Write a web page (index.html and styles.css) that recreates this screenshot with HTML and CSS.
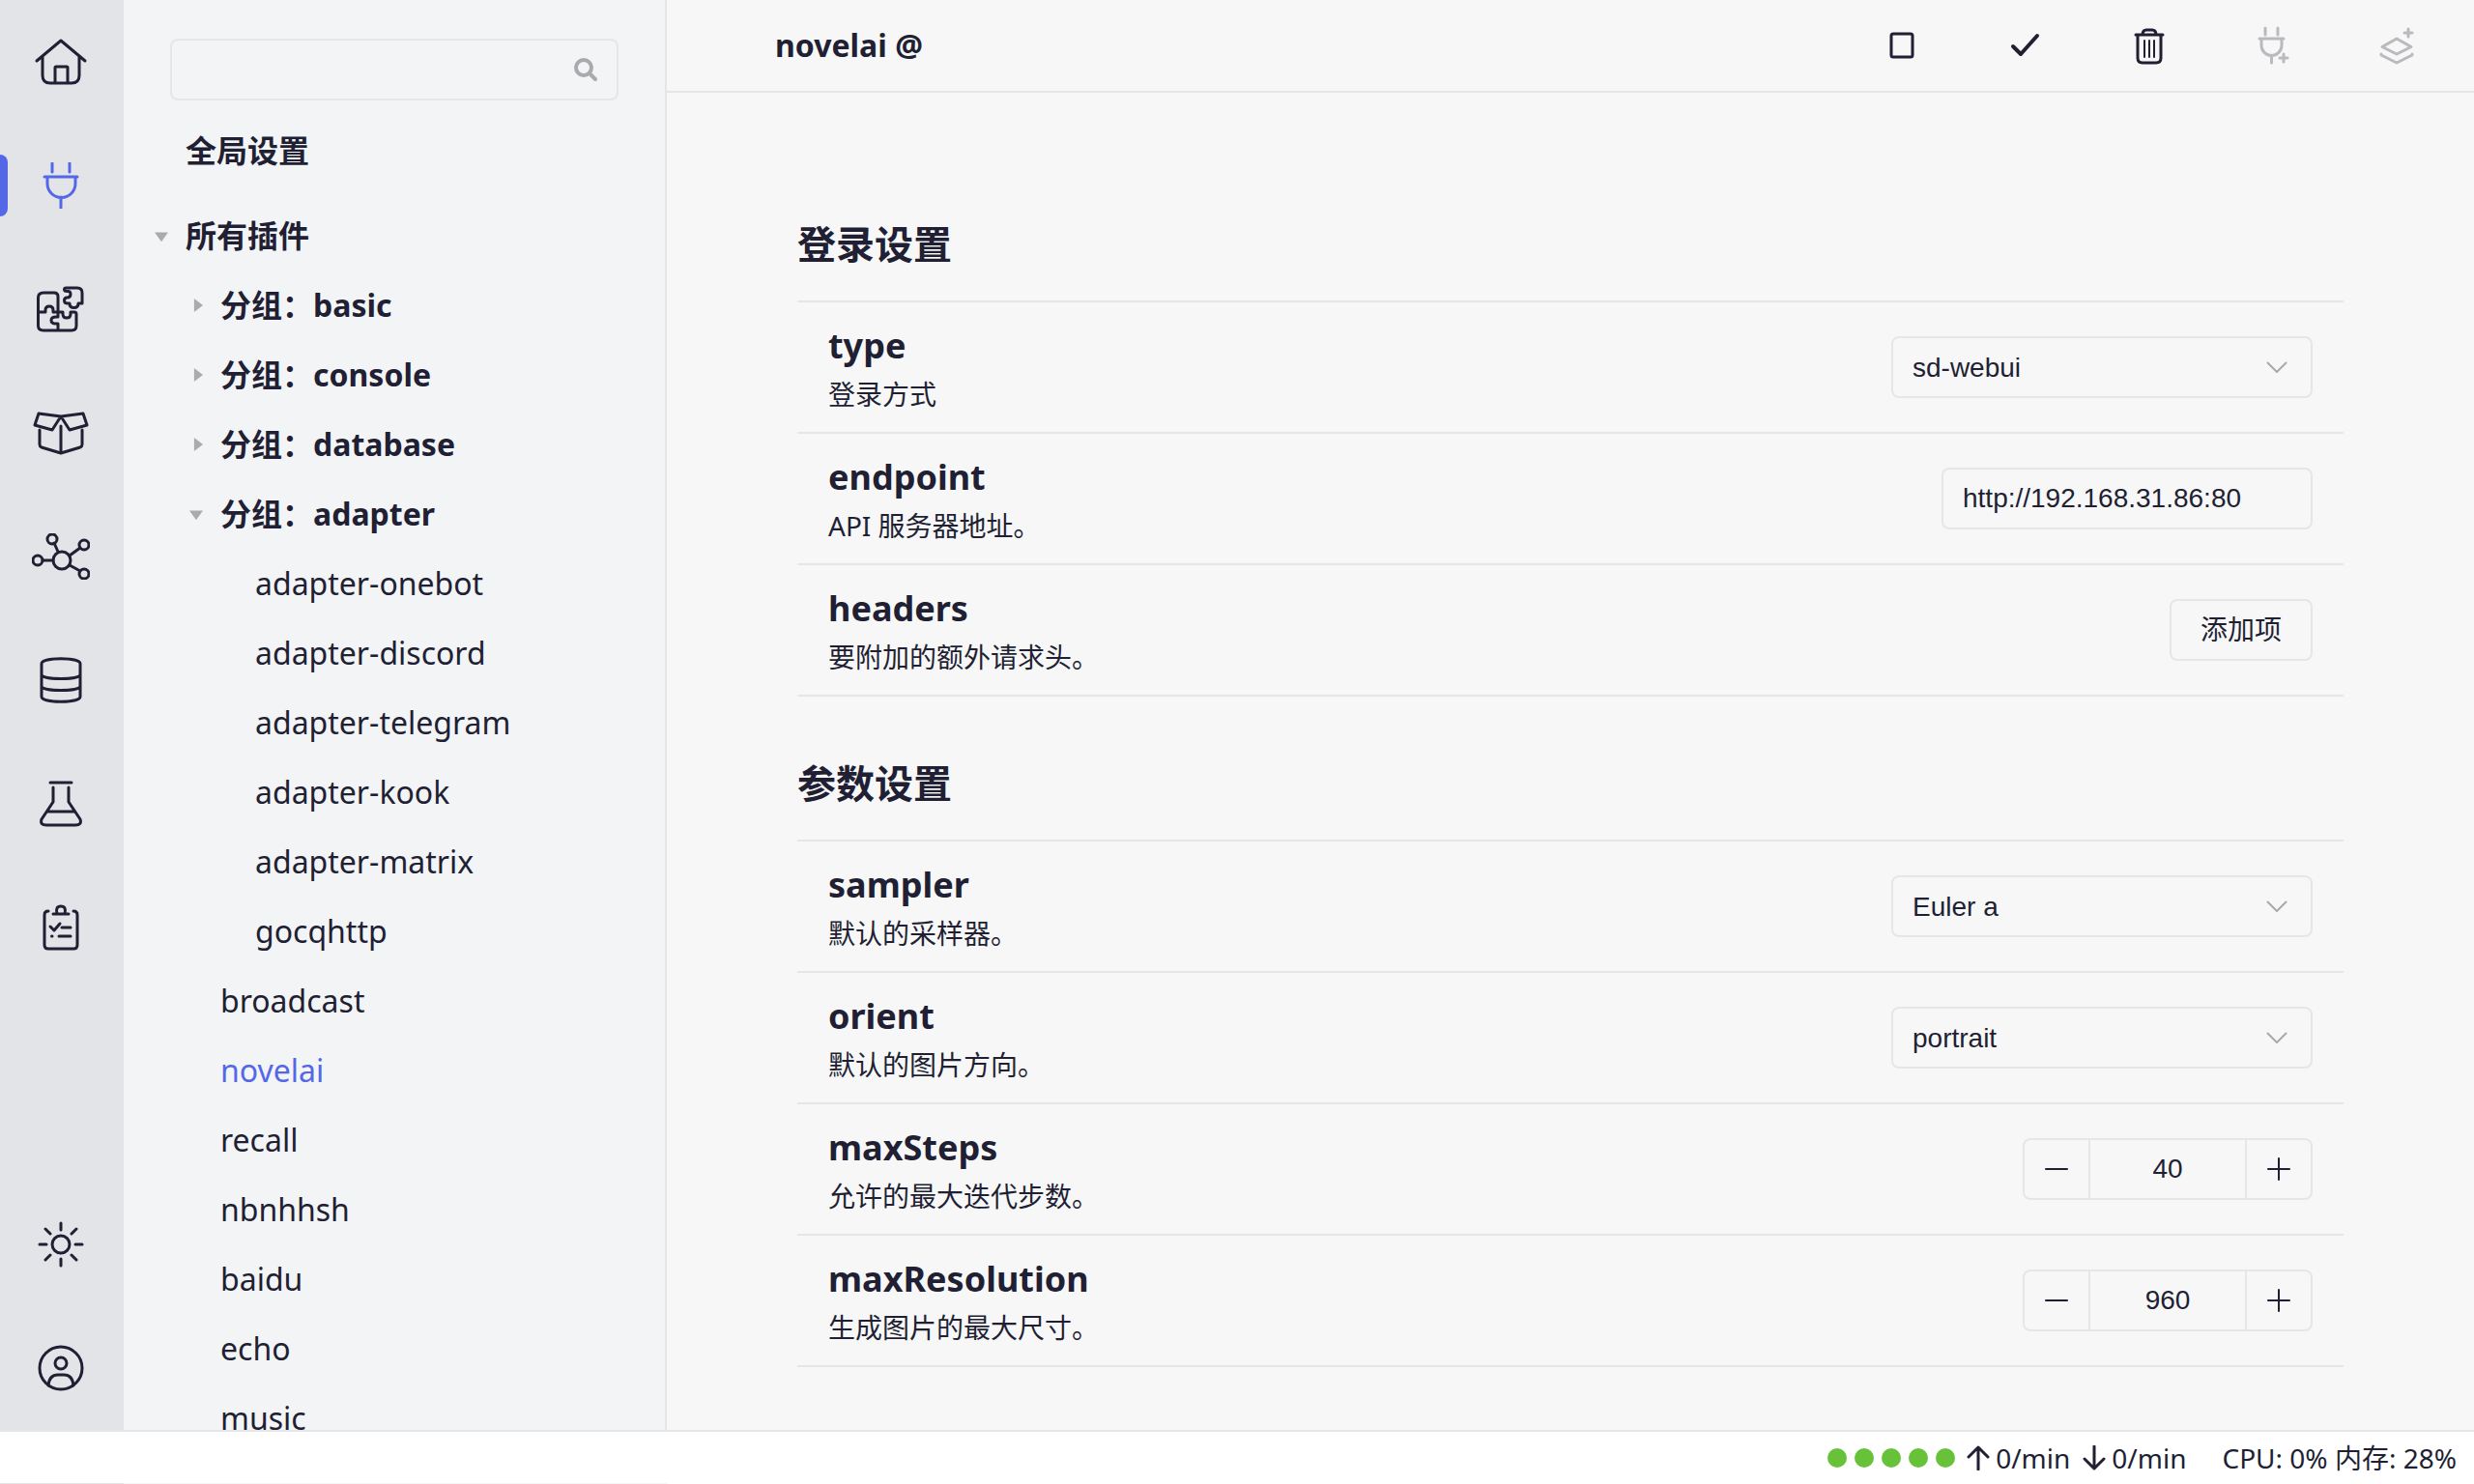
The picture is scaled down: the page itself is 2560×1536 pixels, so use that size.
FILE: index.html
```html
<!DOCTYPE html>
<html lang="zh-CN">
<head>
<meta charset="utf-8">
<title>novelai</title>
<link rel="stylesheet" href="styles.css">
</head>
<body>
<div class="app">
  <nav class="rail" aria-label="导航">
    <a class="rail-item" href="#home" aria-label="首页"><svg class="icon" viewBox="0 0 60 48"><path d="M5 23 30 2l25 21M11 19v19q0 8 8 8h22q8 0 8-8V19M24 46V30q0-1 1-1h11q1 0 1 1v16"/></svg></a>
    <a class="rail-item active" href="#plugins" aria-label="插件"><svg class="icon" viewBox="0 0 60 48"><path d="M21 1v9M39 1v9M13 15h34M16 15v7a14.500 14.500 0 0 0 29 0v-7M30 36v11"/></svg></a>
    <a class="rail-item" href="#market" aria-label="市场"><svg class="icon" viewBox="0 0 60 48"><path d="M27 46V39h-2q-5 0-5-3.500t5-3.500h2V11q0-4-4-4H12q-5.500 0-5.500 5v29q0 5 5.500 5h29q5 0 5-5V29q0-2-2-2h-4v2q0 4-4 4t-4-4v-2H22v-2q0-4-4-4t-4 4v2H7M37 2h10q5 0 5 5v11h-4q0 4.500-4.500 4.500T39 18h-2q-3.500 0-3.500-3t3-3q3.500 0 3.500-3.500T36.500 5.500q-3 0-3-2T37 2z"/></svg></a>
    <a class="rail-item" href="#packages" aria-label="依赖"><svg class="icon" viewBox="0 0 60 48"><path d="M30 7 7 4 3 16l18 5zM30 7l23-3 4 12-18 5zM8 21v15q0 2 2 3l20 6 20-6q2-1 2-3V21M30 17v28"/></svg></a>
    <a class="rail-item" href="#graph" aria-label="网络"><svg class="icon" viewBox="0 0 60 48"><circle cx="31" cy="28" r="9"/><circle cx="21" cy="6" r="5"/><circle cx="54" cy="12" r="5"/><circle cx="6" cy="28" r="5"/><circle cx="54" cy="42" r="5"/><path d="m23 10 4 9M50 15l-11 8M11 28h11M50 39l-11-6"/></svg></a>
    <a class="rail-item" href="#database" aria-label="数据库"><svg class="icon" viewBox="0 0 60 48"><path d="M10 7c0-7 40-7 40 0v34c0 7-40 7-40 0zM10 18c0 6 40 6 40 0M10 30c0 6 40 6 40 0"/></svg></a>
    <a class="rail-item" href="#sandbox" aria-label="沙盒"><svg class="icon" viewBox="0 0 60 48"><path d="M19 2h22M22 7v15L10 40q-2 6 5 6h30q7 0 5-6L38 22V7M16 32h28"/></svg></a>
    <a class="rail-item" href="#logs" aria-label="日志"><svg class="icon" viewBox="0 0 60 48"><path d="M17 7q-4 0-4 4v31q0 4 4 4h26q4 0 4-4V11q0-4-4-4M22 10h16M26 10q-2-8 4-8t4 8M19 23l4 4 6-7M31 24h9M20.500 33h.5M28 33h12"/></svg></a>
    <a class="rail-item rail-bottom" href="#theme" aria-label="主题"><svg class="icon" viewBox="0 0 60 48"><circle cx="30" cy="24" r="9"/><path d="M30 2v7M30 39v7M8 24h7M45 24h7M14 8l5 5M46 8l-5 5M14 40l5-5M46 40l-5-5"/></svg></a>
    <a class="rail-item" href="#user" aria-label="用户"><svg class="icon" viewBox="0 0 60 48"><circle cx="30" cy="24" r="22"/><circle cx="30" cy="19" r="6"/><path d="M17 42q1-11 10-11h6q9 0 10 11"/></svg></a>
  </nav>

  <aside class="sidebar">
    <div class="search">
      <input class="search-input" type="text" aria-label="搜索">
      <svg class="search-icon" viewBox="0 0 24 24"><circle cx="10" cy="10" r="8"/><path d="m16 16 6 6"/></svg>
    </div>
    <ul class="tree">
      <li class="global"><a class="node strong" href="#global">全局设置</a></li>
      <li><a class="node strong" href="#all"><span class="arrow open"></span>所有插件</a>
        <ul class="branch">
          <li><a class="node strong" href="#basic"><span class="arrow"></span>分组：basic</a></li>
          <li><a class="node strong" href="#console"><span class="arrow"></span>分组：console</a></li>
          <li><a class="node strong" href="#db"><span class="arrow"></span>分组：database</a></li>
          <li><a class="node strong" href="#adapter"><span class="arrow open"></span>分组：adapter</a>
            <ul class="branch">
              <li><a class="node" href="#onebot">adapter-onebot</a></li>
              <li><a class="node" href="#discord">adapter-discord</a></li>
              <li><a class="node" href="#telegram">adapter-telegram</a></li>
              <li><a class="node" href="#kook">adapter-kook</a></li>
              <li><a class="node" href="#matrix">adapter-matrix</a></li>
              <li><a class="node" href="#gocqhttp">gocqhttp</a></li>
            </ul>
          </li>
          <li><a class="node" href="#broadcast">broadcast</a></li>
          <li><a class="node current" href="#novelai">novelai</a></li>
          <li><a class="node" href="#recall">recall</a></li>
          <li><a class="node" href="#nbnhhsh">nbnhhsh</a></li>
          <li><a class="node" href="#baidu">baidu</a></li>
          <li><a class="node" href="#echo">echo</a></li>
          <li><a class="node" href="#music">music</a></li>
        </ul>
      </li>
    </ul>
  </aside>

  <main class="main">
    <header class="topbar">
      <h1 class="title">novelai @</h1>
      <div class="actions">
        <button class="action" type="button" aria-label="停用"><svg class="tool" viewBox="0 0 40 40"><rect x="9" y="8" width="22" height="24" rx="2"/></svg></button>
        <button class="action" type="button" aria-label="保存"><svg class="tool heavy" viewBox="0 0 40 40"><path d="m7 21 8 8 17-19"/></svg></button>
        <button class="action" type="button" aria-label="删除"><svg class="tool" viewBox="0 0 40 40"><path d="M6 9h28M13 9q0-5 4-5h6q4 0 4 5M8 9v24q0 5 5 5h14q5 0 5-5V9"/><path class="fine" d="M15 15v17M20 15v17M25 15v17"/></svg></button>
        <button class="action" type="button" aria-label="添加插件" disabled><svg class="tool" viewBox="0 0 40 40"><path d="M12 2v7M25 2v7M6 13h25M8 13v7a10.500 10.500 0 0 0 21 0v-7M18.500 31v7M27 33h8M31 29v8"/></svg></button>
        <button class="action" type="button" aria-label="添加分组" disabled><svg class="tool" viewBox="0 0 40 40"><path d="m20 13 15 8.500-15 7.500-15-7.500zM4 29v1l16 8 16-8v-1M28 7h8M32 3v8"/></svg></button>
      </div>
    </header>

    <form class="content">
      <h2 class="section-title">登录设置</h2>
      <section class="rows">
        <div class="row">
          <div class="info"><label class="name" for="type">type</label><p class="desc">登录方式</p></div>
          <select class="field select" id="type"><option>sd-webui</option></select>
        </div>
        <div class="row">
          <div class="info"><label class="name" for="endpoint">endpoint</label><p class="desc">API 服务器地址。</p></div>
          <input class="field text" id="endpoint" type="text" value="http://192.168.31.86:80">
        </div>
        <div class="row">
          <div class="info"><label class="name" for="headers">headers</label><p class="desc">要附加的额外请求头。</p></div>
          <button class="field add" id="headers" type="button">添加项</button>
        </div>
      </section>

      <h2 class="section-title">参数设置</h2>
      <section class="rows">
        <div class="row">
          <div class="info"><label class="name" for="sampler">sampler</label><p class="desc">默认的采样器。</p></div>
          <select class="field select" id="sampler"><option>Euler a</option></select>
        </div>
        <div class="row">
          <div class="info"><label class="name" for="orient">orient</label><p class="desc">默认的图片方向。</p></div>
          <select class="field select" id="orient"><option>portrait</option></select>
        </div>
        <div class="row">
          <div class="info"><label class="name" for="steps">maxSteps</label><p class="desc">允许的最大迭代步数。</p></div>
          <div class="field stepper">
            <button class="step" type="button" aria-label="减少"><svg class="sign" viewBox="0 0 24 24"><path d="M1 12h22"/></svg></button>
            <input class="number" id="steps" type="text" value="40">
            <button class="step" type="button" aria-label="增加"><svg class="sign" viewBox="0 0 24 24"><path d="M1 12h22M12 1v22"/></svg></button>
          </div>
        </div>
        <div class="row">
          <div class="info"><label class="name" for="resolution">maxResolution</label><p class="desc">生成图片的最大尺寸。</p></div>
          <div class="field stepper">
            <button class="step" type="button" aria-label="减少"><svg class="sign" viewBox="0 0 24 24"><path d="M1 12h22"/></svg></button>
            <input class="number" id="resolution" type="text" value="960">
            <button class="step" type="button" aria-label="增加"><svg class="sign" viewBox="0 0 24 24"><path d="M1 12h22M12 1v22"/></svg></button>
          </div>
        </div>
      </section>
    </form>
  </main>

  <footer class="status">
    <div class="bots"><i class="dot"></i><i class="dot"></i><i class="dot"></i><i class="dot"></i><i class="dot"></i></div>
    <svg class="flow" viewBox="0 0 24 26"><path d="M12 25V2M2 12 12 2l10 10"/></svg>
    <span class="rate">0/min</span>
    <svg class="flow" viewBox="0 0 24 26"><path d="M12 1v23M2 14l10 10 10-10"/></svg>
    <span class="rate">0/min</span>
    <span class="load">CPU: 0% 内存: 28%</span>
  </footer>
</div>
</body>
</html>
```
FILE: styles.css
```css
* { box-sizing: border-box; }

:root {
  --text: #211f33;
  --accent: #5468e7;
  --line: #e6e6e8;
  --muted: #a9aaad;
  --rail: #e3e4e8;
  --side: #f3f4f6;
  --ui: "Noto Sans", "Noto Sans CJK SC", sans-serif;
  --control: "Liberation Sans", "Noto Sans CJK SC", sans-serif;
}

body {
  margin: 0;
  color: var(--text);
  font: 32px/48px var(--ui);
}

h1, h2, p, ul { margin: 0; padding: 0; }
ul { list-style: none; }
a { color: inherit; text-decoration: none; }
svg { fill: none; stroke: currentColor; stroke-linecap: round; stroke-linejoin: round; }
button, input, select { margin: 0; color: inherit; }

.app {
  display: grid;
  grid-template: minmax(0, 1fr) auto / 128px 562px minmax(0, 1fr);
  height: 100vh;
}

/* icon rail */
.rail {
  display: flex;
  flex-direction: column;
  background: var(--rail);
}
.rail-item {
  position: relative;
  display: flex;
  align-items: center;
  justify-content: center;
  height: 128px;
  padding-right: 2px;
}
.rail-item.active { color: var(--accent); }
.rail-item.active::before {
  content: "";
  position: absolute;
  top: 32px;
  left: 0;
  width: 8px;
  height: 64px;
  border-radius: 0 8px 8px 0;
  background: var(--accent);
}
.rail-bottom { margin-top: auto; }
.icon { width: 60px; height: 48px; stroke-width: 3px; }

/* plugin tree */
.sidebar {
  overflow: hidden;
  padding: 40px 48px 0;
  background: var(--side);
  border-right: 2px solid var(--line);
}
.search {
  display: flex;
  align-items: center;
  height: 64px;
  padding-right: 20px;
  border: 2px solid var(--line);
  border-radius: 8px;
}
.search-input {
  flex: 1;
  min-width: 0;
  height: 100%;
  padding: 0 20px;
  border: 0;
  background: none;
  font: 28px var(--control);
}
.search-icon { width: 24px; height: 24px; color: var(--muted); stroke-width: 4px; }
.tree { padding: 16px 0 0 16px; }
.global { margin-bottom: 16px; }
.branch { padding-left: 36px; }
.node {
  display: flex;
  align-items: center;
  height: 72px;
  white-space: nowrap;
}
.strong { font-weight: 700; }
.current { color: var(--accent); }
.arrow {
  width: 14px;
  height: 14px;
  margin: 0 18px 0 -32px;
  background: var(--muted);
  clip-path: polygon(35% 0, 100% 50%, 35% 100%);
}
.arrow.open { clip-path: polygon(0 25%, 100% 25%, 50% 95%); }

/* settings */
.main {
  overflow: hidden;
  background: #f7f7f7;
}
.topbar {
  display: flex;
  align-items: center;
  justify-content: space-between;
  height: 96px;
  padding: 0 16px 0 112px;
  border-bottom: 2px solid var(--line);
}
.title { font-size: 32px; line-height: 48px; }
.actions { display: flex; }
.action {
  display: flex;
  align-items: center;
  justify-content: center;
  width: 128px;
  height: 94px;
  padding: 0;
  border: 0;
  background: none;
}
.action:disabled { color: #b9babd; }
.tool { width: 40px; height: 40px; stroke-width: 3px; }
.heavy { stroke-width: 4px; }
.fine { stroke-width: 2px; }

.content {
  max-width: 1600px;
  margin: 0 auto;
  padding-top: 129px;
}
.section-title {
  padding-bottom: 30px;
  font-size: 40px;
  line-height: 56px;
}
.rows {
  margin-bottom: 62px;
  border-top: 2px solid var(--line);
}
.row {
  display: flex;
  align-items: center;
  justify-content: space-between;
  height: 136px;
  padding: 0 32px;
  border-bottom: 2px solid var(--line);
}
.info { padding-top: 4px; }
.name {
  display: block;
  font-size: 36px;
  font-weight: 700;
  line-height: 52px;
}
.desc { font-size: 28px; line-height: 48px; }

.field {
  height: 64px;
  border: 2px solid var(--line);
  border-radius: 8px;
  background: none;
  font: 28px var(--control);
}
.select {
  appearance: none;
  width: 436px;
  padding: 0 20px;
  background: url("data:image/svg+xml,%3Csvg xmlns='http://www.w3.org/2000/svg' width='22' height='12' fill='none' stroke='%23a9aaad' stroke-width='2'%3E%3Cpath d='M1 1l10 10L21 1'/%3E%3C/svg%3E") right 24px center no-repeat;
}
.text { width: 384px; padding: 0 20px; }
.add { width: 148px; padding: 0 0 4px; }
.stepper { display: flex; width: 300px; }
.step {
  display: flex;
  align-items: center;
  justify-content: center;
  width: 66px;
  padding: 0;
  border: 0;
  background: none;
}
.sign { width: 24px; height: 24px; stroke-width: 2px; }
.number {
  flex: 1;
  min-width: 0;
  padding: 0;
  border: solid var(--line);
  border-width: 0 2px;
  background: none;
  font: inherit;
  text-align: center;
}

/* status bar */
.status {
  display: flex;
  grid-column: 1 / -1;
  align-items: center;
  justify-content: flex-end;
  height: 56px;
  padding: 0 18px;
  background: linear-gradient(90deg, var(--rail) 128px, var(--side) 128px) left bottom / 690px 1px no-repeat #fff;
  border-top: 2px solid var(--line);
  font-size: 28px;
  line-height: 40px;
}
.bots { display: flex; gap: 8px; margin-right: 12px; }
.dot { width: 20px; height: 20px; border-radius: 50%; background: #67c23a; }
.flow { width: 24px; height: 26px; margin-right: 6px; stroke-width: 3px; }
.rate { margin-right: 13px; }
.load { margin-left: 24px; }
```
